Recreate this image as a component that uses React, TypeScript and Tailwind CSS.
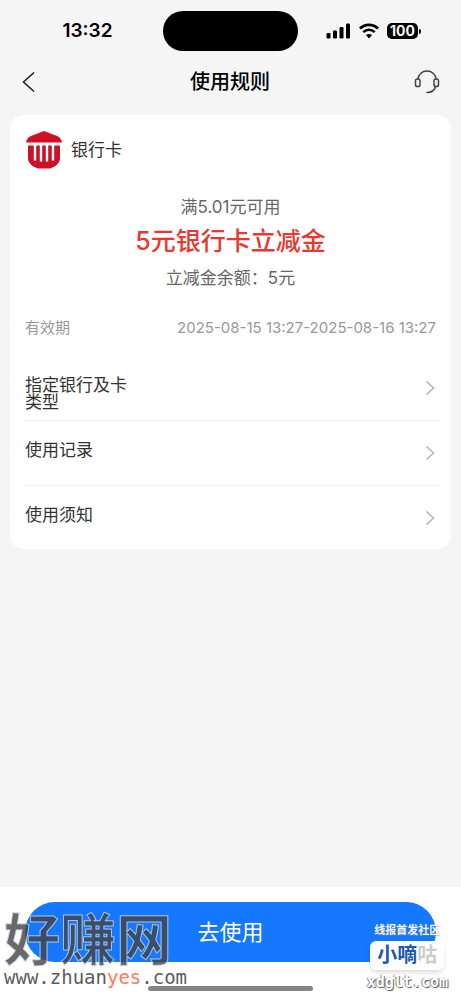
import React from 'react';

interface RuleRowProps {
  label: string;
  last?: boolean;
}

const SignalIcon = () => (
  <svg width="25" height="16" viewBox="0 0 25 16" fill="#000" aria-hidden="true">
    <rect x="0.5" y="10" width="4" height="5.5" rx="1.2" />
    <rect x="7" y="7.5" width="4" height="8" rx="1.2" />
    <rect x="13.5" y="4" width="4" height="11.5" rx="1.2" />
    <rect x="20" y="0.5" width="4" height="15" rx="1.2" />
  </svg>
);

const WifiIcon = () => (
  <svg width="20" height="16" viewBox="0 0 20 16" fill="none" stroke="#000" aria-hidden="true">
    <path d="M1 5.6C6 .6 14 .6 19 5.6" strokeWidth="2.8" />
    <path d="M4.3 9.2c3.2-3.2 8.2-3.2 11.4 0" strokeWidth="2.6" />
    <path d="M10 15.4l-3.1-3.3c1.7-1.6 4.5-1.6 6.2 0z" fill="#000" stroke="none" />
  </svg>
);

const HeadsetIcon = () => (
  <svg
    width="26"
    height="26"
    viewBox="0 0 26 26"
    fill="none"
    stroke="#444"
    strokeWidth="1.5"
    strokeLinecap="round"
    aria-hidden="true"
  >
    <path d="M4 10C4.400 5.300 8.200 2 13 2s8.600 3.300 9 8" />
    <rect x="1.500" y="10" width="4.500" height="7.500" rx="1.800" />
    <rect x="20" y="10" width="4.500" height="7.500" rx="1.800" />
    <path d="M21.500 17.500c-1 3.800-4.300 6-8.500 6" />
  </svg>
);

const BankIcon = () => (
  <svg width="38" height="38" viewBox="0 0 38 38" fill="#ce1126" aria-hidden="true">
    <path d="M19 0l13 5c2.800 1.200 4.500 3.300 5 6.500H1C1.500 8.300 3.200 6.200 6 5z" />
    <path d="M3 14.500h32V27c0 5.500-5 9-10 10.500H13C8 36 3 32.500 3 27z" />
    <path
      d="M10 14v15.500M16 14v16.500M22 14v16.500M28 14v15.500"
      fill="none"
      stroke="#fff"
      strokeWidth="2.400"
    />
  </svg>
);

const RuleRow: React.FC<RuleRowProps> = ({ label, last }) => (
  <button
    type="button"
    className={`flex w-full justify-between pr-[6px] text-left ${last ? 'h-[63px]' : 'h-[65px] border-b border-[#f0f0f0]'}`}
  >
    <span className="w-28 pt-[21px] text-[17px] leading-[17px] text-[#333]">{label}</span>
    <svg
      width="10"
      height="16"
      viewBox="0 0 10 16"
      fill="none"
      stroke="#b8b8b8"
      strokeWidth="1.700"
      className="self-center"
      aria-hidden="true"
    >
      <path d="M1.500 1.500L8.500 8l-7 6.500" />
    </svg>
  </button>
);

const StatusBar = () => (
  <div className="grid h-[58px] grid-cols-[1fr_135px_1fr] items-center pt-1">
    <span className="pl-3 text-center text-[19px] leading-6 font-semibold text-black">13:32</span>
    <div className="h-10 rounded-full bg-black" />
    <div className="flex items-center gap-2 pl-7">
      <SignalIcon />
      <WifiIcon />
      <div className="flex items-center gap-px">
        <span className="flex h-4 w-[31px] items-center justify-center rounded-[5px] bg-black text-[14px] leading-4 font-bold text-[#f5f5f5]">
          100
        </span>
        <span className="h-[5px] w-[2px] rounded-r-full bg-black" />
      </div>
    </div>
  </div>
);

const Header = () => (
  <header className="flex h-12 items-center justify-between pr-[21px] pl-5">
    <button type="button" aria-label="返回" className="flex w-[26px]">
      <svg width="16" height="22" viewBox="0 0 16 22" fill="none" stroke="#222" strokeWidth="1.600">
        <path d="M14 1.500L3.500 11 14 20.500" />
      </svg>
    </button>
    <h1 className="text-[20px] leading-7 font-medium text-black">使用规则</h1>
    <button type="button" aria-label="客服">
      <HeadsetIcon />
    </button>
  </header>
);

const App = () => {
  return (
    <div className="relative flex min-h-screen flex-col overflow-hidden bg-[#f5f5f5] font-['Inter','Noto_Sans_CJK_SC',sans-serif]">
      <StatusBar />
      <Header />

      <main className="flex-1 px-[10px] pt-[9px]">
        <section className="rounded-[14px] bg-white pr-[10px] pl-[15px]">
          <div className="flex items-center gap-2 pt-4">
            <BankIcon />
            <h2 className="text-[17px] leading-6 text-[#333]">银行卡</h2>
          </div>

          <div className="pt-6 pr-[5px] text-center text-[#666]">
            <p className="text-[17px] leading-7">满5.01元可用</p>
            <p className="pt-1 text-[25px] leading-8 font-medium text-[#e8382f]">5元银行卡立减金</p>
            <p className="pt-[7px] text-[17px] leading-7">立减金余额：5元</p>
          </div>

          <div className="flex items-center justify-between pt-6 pr-[5px] pb-4 text-[15px] leading-6 text-[#999]">
            <span>有效期</span>
            <span>2025-08-15 13:27-2025-08-16 13:27</span>
          </div>

          <RuleRow label="指定银行及卡类型" />
          <RuleRow label="使用记录" />
          <RuleRow label="使用须知" last />
        </section>
      </main>

      <footer className="bg-white px-[25px] pt-[15px] pb-[9px]">
        <button
          type="button"
          className="h-[60px] w-full rounded-full bg-[#1677ff] text-[22px] leading-8 text-white"
        >
          去使用
        </button>
        <div className="mx-auto mt-6 h-[5px] w-[165px] rounded-full bg-[#858585]" />
      </footer>

      {/* Site marks floating over the footer */}
      <div className="pointer-events-none absolute bottom-[15px] left-1 opacity-80">
        <p className="pb-1 text-[56px] leading-[50px] font-bold text-[#444] [-webkit-text-stroke:1px_#c8d4e4]">
          好赚网
        </p>
        <p className="font-['DejaVu_Sans_Mono',monospace] text-[19px] leading-4 text-[#333]">
          www.zhuan<span className="text-[#ff5a36]">yes</span>.com
        </p>
      </div>
      <div className="pointer-events-none absolute right-[13px] bottom-[6px] flex flex-col items-center">
        <p className="pb-[3px] text-[11px] leading-4 font-bold text-[#f0f4fa] [text-shadow:0_1px_1px_#8888]">
          线报首发社区
        </p>
        <p className="rounded-md bg-white px-[7px] text-[20px] leading-[29px] font-bold text-[#1d57ae] shadow-md">
          小嘀<span className="text-[#ccc]">咕</span>
        </p>
        <p className="font-['DejaVu_Sans_Mono',monospace] text-[15px] leading-6 font-bold text-white [text-shadow:1px_1px_1px_#555,-1px_0_1px_#888]">
          xdglt.com
        </p>
      </div>
    </div>
  );
};

export default App;
